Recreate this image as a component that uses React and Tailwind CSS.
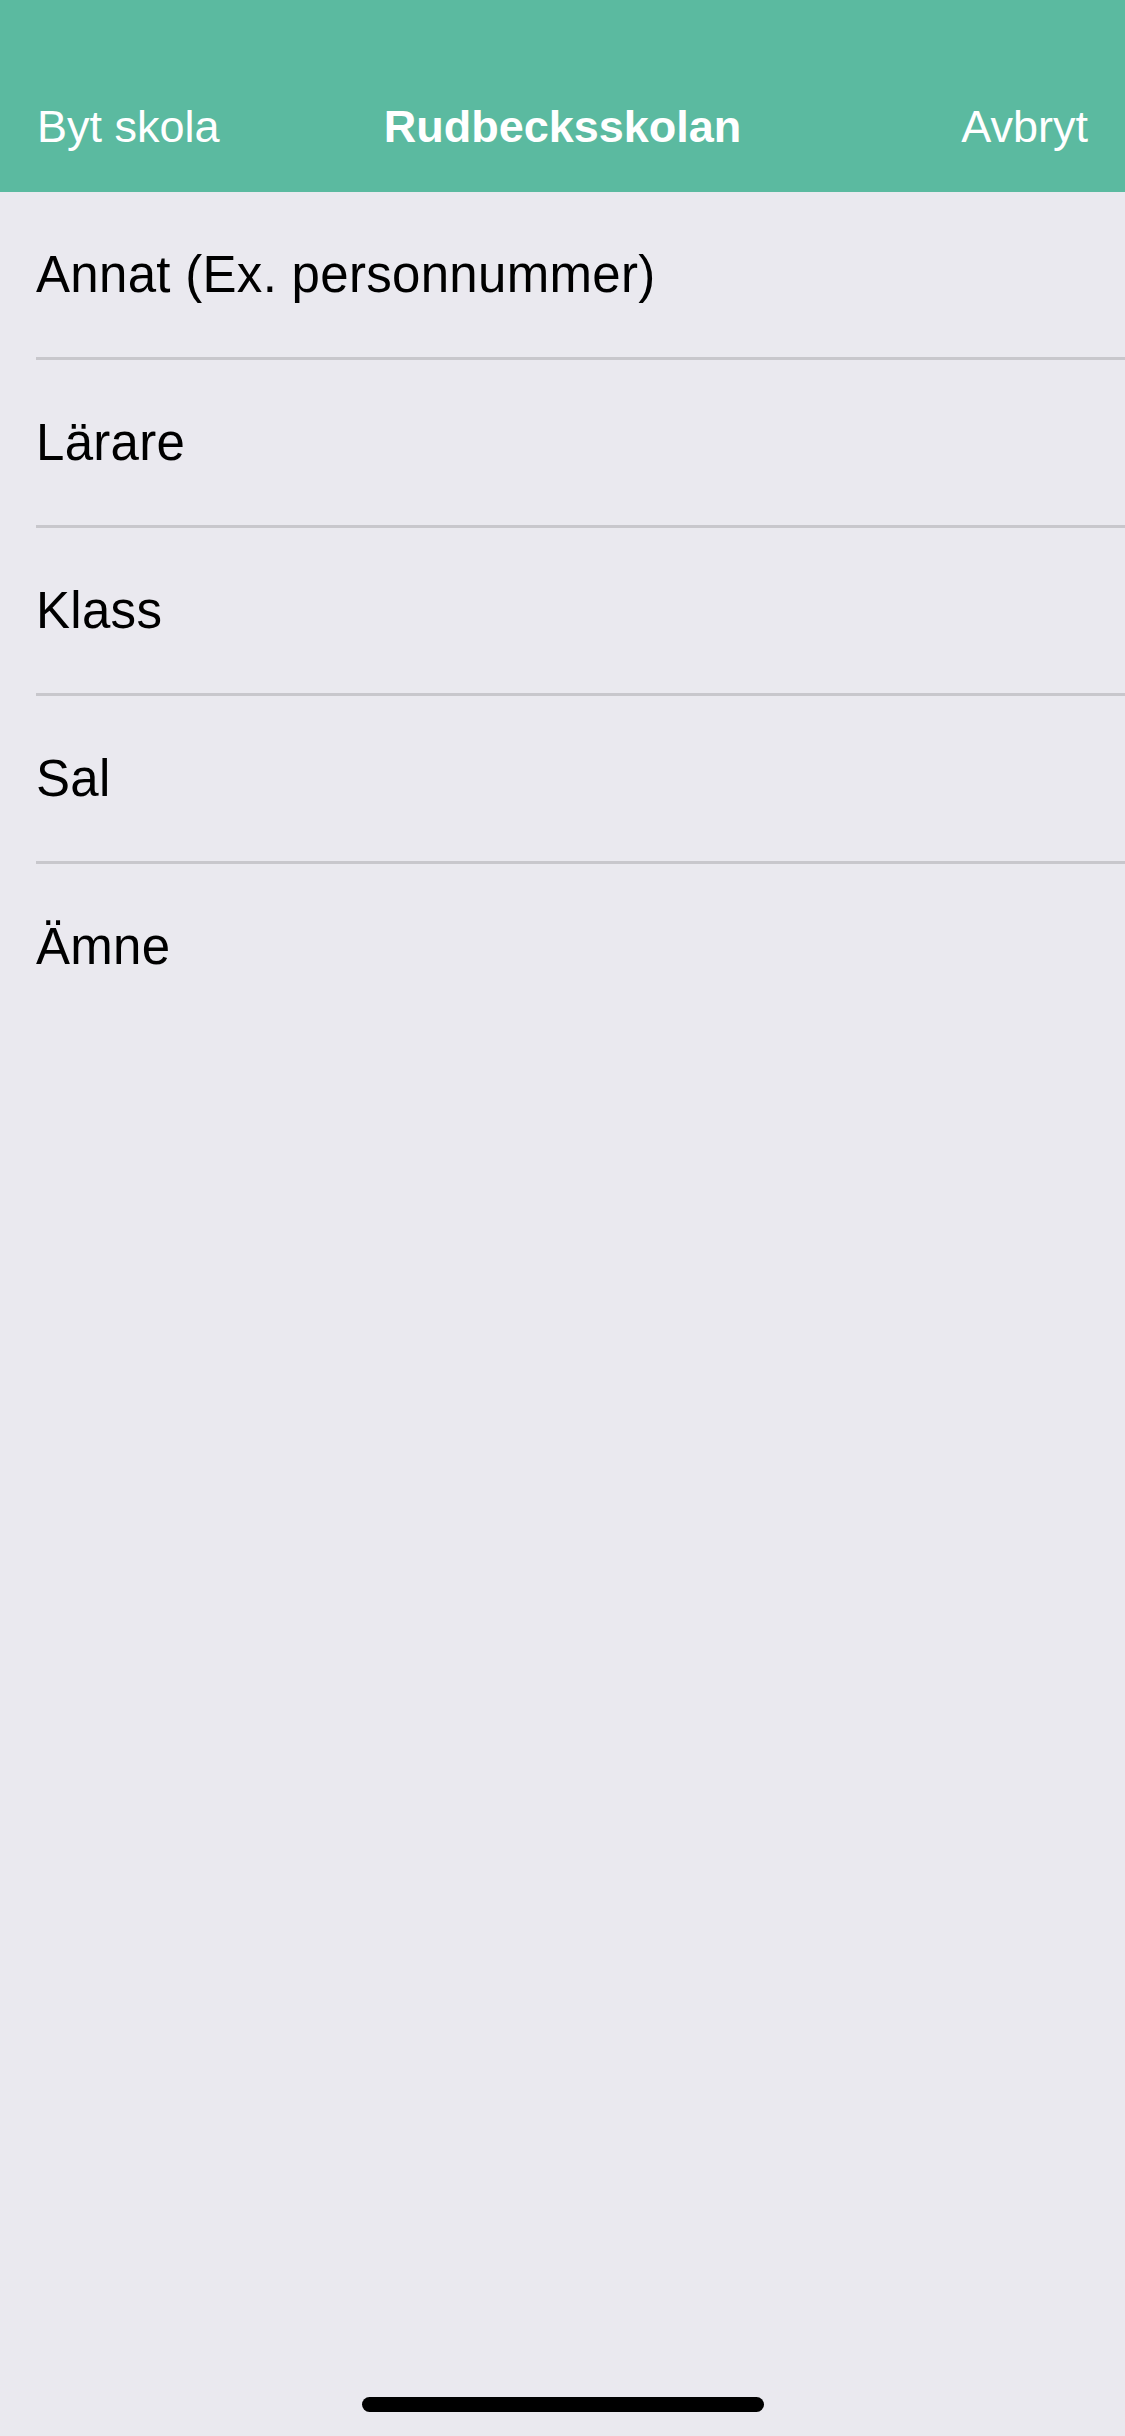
import React from 'react';

const items = ['Annat (Ex. personnummer)', 'Lärare', 'Klass', 'Sal', 'Ämne'];

const App = () => {
  return (
    <div
      className="min-h-[2436px] w-[1125px] flex flex-col bg-[#eae9ef]"
      style={{ fontFamily: '"Liberation Sans", Arial, sans-serif' }}
    >
      {/* Nav bar */}
      <div className="h-[192px] bg-[#5bbaa0] pt-[100px] px-[37px] relative">
        <div className="flex justify-between items-center h-[54px] text-white text-[45px] leading-[54px]">
          <span>Byt skola</span>
          <span>Avbryt</span>
        </div>
        <div className="absolute left-0 right-0 top-[100px] text-center text-white text-[45px] leading-[54px] font-bold">
          Rudbecksskolan
        </div>
      </div>

      {/* List */}
      <div className="flex flex-col">
        {items.map((item, i) => (
          <div key={item}>
            <div className="h-[165px] flex items-center pl-[36px] text-black text-[51px] leading-[57px] tracking-[0.3px]">
              {item}
            </div>
            {i < items.length - 1 && <div className="ml-[36px] h-[3px] bg-[#c8c7cc]" />}
          </div>
        ))}
      </div>

      <div className="flex-1" />

      {/* Home indicator */}
      <div className="flex justify-center pb-[24px]">
        <div className="w-[402px] h-[15px] rounded-full bg-black" />
      </div>
    </div>
  );
};

export default App;
